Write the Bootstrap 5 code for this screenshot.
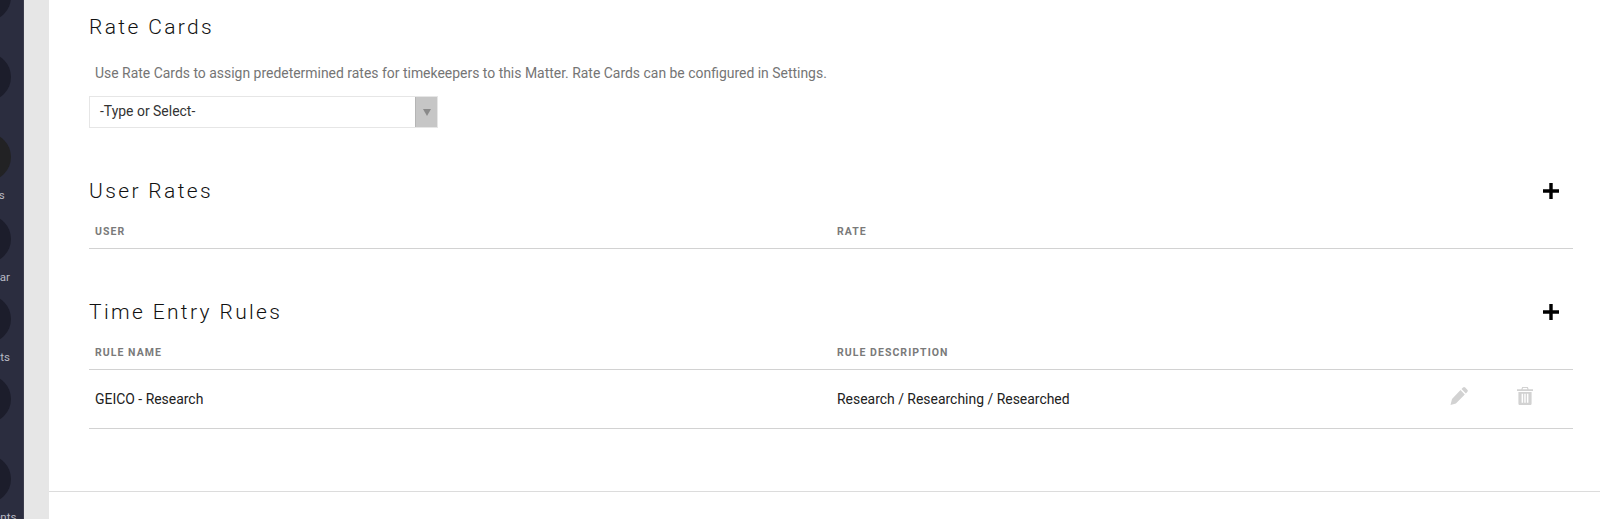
<!DOCTYPE html>
<html lang="en">
<head>
<meta charset="utf-8">
<title>Matter rates</title>
<link href="https://cdn.jsdelivr.net/npm/bootstrap@5.3.0/dist/css/bootstrap.min.css" rel="stylesheet">
<style>
html,body{height:519px;overflow:hidden;background:#fff}
body{font-family:Roboto,"Liberation Sans",sans-serif;font-size:13.95px;color:#212121}
.shell{height:519px}
.side-rail{width:24px;background:#2b2d3f;overflow:hidden;flex:none;border-right:1px solid #3b3c4c}
.rail-stack{width:90px;margin-left:-58px;margin-top:-27px}
.rail-item{height:80px;text-align:center;color:#b9bac4;font-size:11.5px;line-height:13px}
.rail-item.wide{height:82px}
.rail-dot{width:48px;height:48px;border-radius:50%;background:#1c1d2b;margin:0 auto 8px}
.rail-dot.neutral{background:#222224}
.gutter{width:25px;background:#e6e6e6;flex:none}
.main-pane{min-width:0}
.content-area{padding:0 27px 0 40px;border-bottom:1px solid #dcdcdc;box-sizing:content-box;height:491px}
.sect-title{font-size:21px;font-weight:300;letter-spacing:2.36px;color:#111;line-height:24px;margin:0}
.rate-head{padding-top:15px}
.help-line{color:#757575;font-size:13.95px;line-height:20px;padding-left:6px;margin:24px 0 13px}
.combo{width:349px;height:32px;border:1px solid #e6e6e6;background:#fff}
.combo-text{padding-left:10px;line-height:28px;color:#333}
.combo-arrow{width:22px;background:#c6c6c6;border-left:1px solid #b5b5b5}
.combo-arrow svg{display:block}
.user-block{margin-top:51px}
.rule-block{margin-top:51px}
.plus-btn{border:0;background:none;padding:0;line-height:0;margin-right:14.5px}
.col-heads{margin-top:20px;height:17px;border-bottom:1px solid #d2d2d2;box-sizing:content-box;padding-bottom:8px}
.col-head{font-size:10.5px;font-weight:700;letter-spacing:1.05px;color:#7a7a7a;line-height:17px;padding-left:6px;text-transform:uppercase}
.data-row{height:59px;border-bottom:1px solid #d2d2d2;line-height:58px}
.data-cell{padding-left:6px;color:#212121}
.act-icons{gap:49px;padding-right:40.5px;padding-bottom:7px}
.act-icons svg{display:block}
</style>
</head>
<body>
<div class="shell d-flex">
  <nav class="side-rail">
    <div class="rail-stack">
      <div class="rail-item"><div class="rail-dot"></div></div>
      <div class="rail-item"><div class="rail-dot"></div></div>
      <div class="rail-item wide"><div class="rail-dot neutral"></div>Clients</div>
      <div class="rail-item"><div class="rail-dot"></div>Calendar</div>
      <div class="rail-item"><div class="rail-dot"></div>Contacts</div>
      <div class="rail-item"><div class="rail-dot"></div></div>
      <div class="rail-item"><div class="rail-dot"></div>Documents</div>
    </div>
  </nav>
  <div class="gutter"></div>
  <main class="main-pane flex-grow-1">
    <div class="content-area">
      <section class="rate-head">
        <h2 class="sect-title">Rate Cards</h2>
        <p class="help-line">Use Rate Cards to assign predetermined rates for timekeepers to this Matter. Rate Cards can be configured in Settings.</p>
        <div class="combo d-flex justify-content-between">
          <span class="combo-text">-Type or Select-</span>
          <span class="combo-arrow d-flex align-items-center justify-content-center">
            <svg width="8" height="7" viewBox="0 0 8 7"><path d="M0 0h8L4 7z" fill="#8a8a8a"/></svg>
          </span>
        </div>
      </section>
      <section class="user-block">
        <div class="d-flex justify-content-between align-items-center">
          <h2 class="sect-title">User Rates</h2>
          <button class="plus-btn" type="button" aria-label="Add user rate"><svg width="16" height="16" viewBox="0 0 16 16"><path d="M8 0v16M0 8h16" stroke="#000" stroke-width="3.4" fill="none"/></svg></button>
        </div>
        <div class="row g-0 col-heads">
          <div class="col-6 col-head">User</div>
          <div class="col-6 col-head">Rate</div>
        </div>
      </section>
      <section class="rule-block">
        <div class="d-flex justify-content-between align-items-center">
          <h2 class="sect-title">Time Entry Rules</h2>
          <button class="plus-btn" type="button" aria-label="Add rule"><svg width="16" height="16" viewBox="0 0 16 16"><path d="M8 0v16M0 8h16" stroke="#000" stroke-width="3.4" fill="none"/></svg></button>
        </div>
        <div class="row g-0 col-heads">
          <div class="col-6 col-head">Rule Name</div>
          <div class="col-6 col-head">Rule Description</div>
        </div>
        <div class="row g-0 data-row">
          <div class="col-6 data-cell">GEICO - Research</div>
          <div class="col-6 data-cell d-flex justify-content-between align-items-center">
            <span>Research / Researching / Researched</span>
            <span class="act-icons d-flex align-items-center">
              <svg width="18" height="18" viewBox="0 0 18 18" fill="#d2d2d2"><path d="M13 .6a1.6 1.6 0 0 1 2.2 0l2.1 2.1a1.6 1.6 0 0 1 0 2.2l-1.5 1.5-4.3-4.3zM10.5 3.1l4.3 4.3-8.9 9L.5 18 2 12z"/></svg>
              <svg width="16" height="18" viewBox="0 0 16 18" fill="#d2d2d2"><path d="M5.2 0h5.6l.9 2.2H16v1.7H0V2.2h4.3zM6 1.1l-.4 1.1h4.8L10 1.1zM1.4 5h13.2v11.4c0 .9-.7 1.6-1.6 1.6H3c-.9 0-1.6-.7-1.6-1.6zM4.6 6.8v9h1.5v-9zm2.7 0v9h1.4v-9zm2.6 0v9h1.5v-9z" fill-rule="evenodd"/></svg>
            </span>
          </div>
        </div>
      </section>
    </div>
  </main>
</div>
<script src="https://cdn.jsdelivr.net/npm/bootstrap@5.3.0/dist/js/bootstrap.bundle.min.js"></script>
</body>
</html>
